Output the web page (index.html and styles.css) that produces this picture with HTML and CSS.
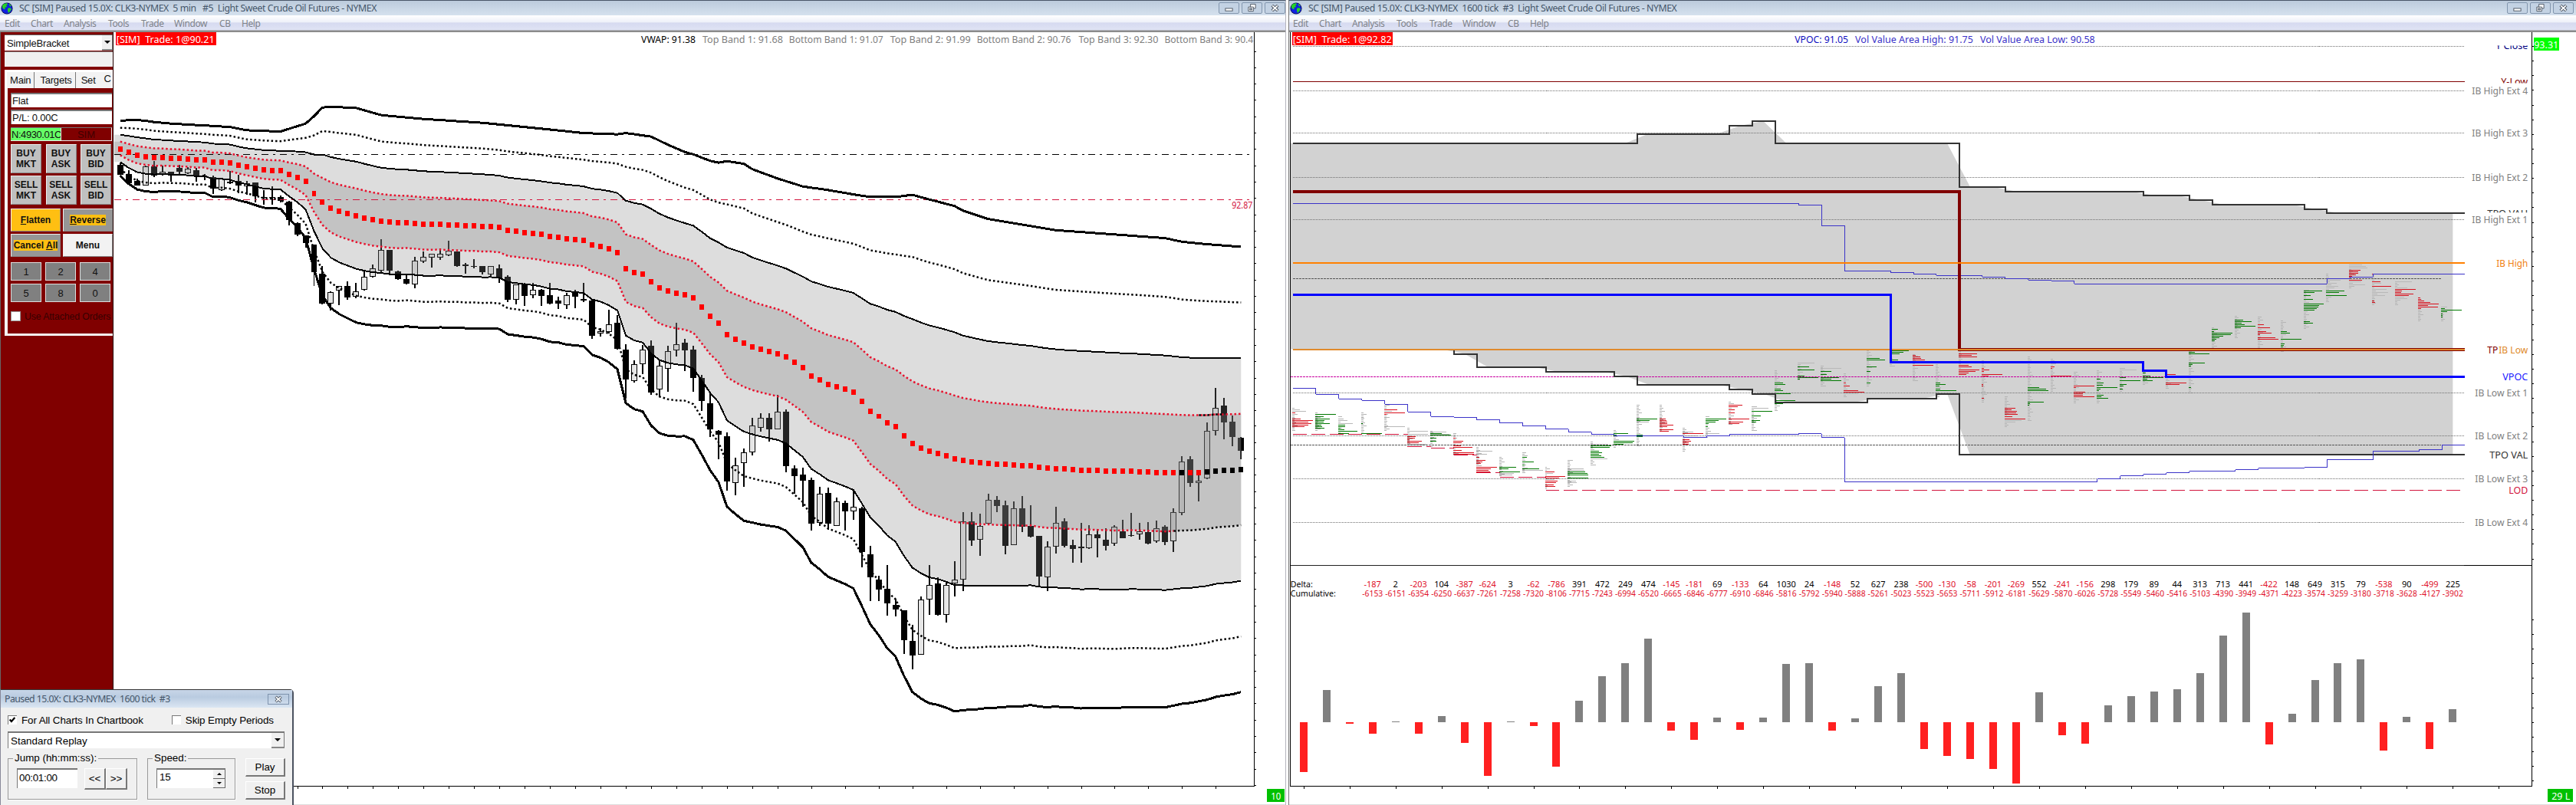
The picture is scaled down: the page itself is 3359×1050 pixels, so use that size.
FILE: index.html
```html
<!DOCTYPE html>
<html>
<head>
	<meta charset="UTF-8">
	<title>CLK3-NYMEX</title>
	<link rel="stylesheet" href="styles.css">
</head>
<body>
	<svg width="0" height="0" class="defs">
		<symbol id="globe" viewBox="0 0 16 16">
			<circle cx="8" cy="8" r="7.6" fill="#0a0a50"/>
			<circle cx="8" cy="8" r="6.8" fill="#1022e0"/>
			<path d="M2 4 Q4 1 8 1.3 L9 3 L7 4 L8 6 L5 7 L6 9 L4 9 L2 7Z" fill="#25d225"/>
			<path d="M9 8 L12 7 L14 9 L12 12 L10 14 L9 11Z" fill="#25d225"/>
			<path d="M11 2 L13.5 4 L13 5.5 L11 4Z" fill="#25d225"/>
		</symbol>
		<symbol id="min" viewBox="0 0 27 14"><rect x="8.5" y="7.5" width="10" height="3.5" fill="#fff" stroke="#48525f"/></symbol>
		<symbol id="restore" viewBox="0 0 27 14">
			<path d="M11.500 1.500h7v6h-7z" fill="#fff" stroke="#48525f"/>
			<path d="M8.500 5.500h7v6h-7z" fill="#fff" stroke="#48525f"/>
			<path d="M10.500 7.500h3v2h-3z" fill="#b9c9dc" stroke="#48525f"/>
		</symbol>
		<symbol id="close" viewBox="0 0 27 14">
			<path d="M9.500 3.300 L17.500 10.700 M17.500 3.300 L9.500 10.700" stroke="#48525f" stroke-width="4"/>
			<path d="M9.900 3.600 L17.100 10.400 M17.100 3.600 L9.900 10.400" stroke="#fff" stroke-width="2"/>
		</symbol>
	</svg>

	<div class="desktop">
		<div class="window left">
			<div class="titlebar">
				<svg class="globe"><use href="#globe"/></svg>
				<span class="title">SC [SIM] Paused 15.0X: CLK3-NYMEX&nbsp; 5 min&nbsp;&nbsp; #5&nbsp; Light Sweet Crude Oil Futures - NYMEX</span>
				<div class="winbtns">
					<svg><use href="#min"/></svg><svg><use href="#restore"/></svg><svg><use href="#close"/></svg>
				</div>
			</div>
			<div class="menubar"><span>Edit</span><span>Chart</span><span>Analysis</span><span>Tools</span><span>Trade</span><span>Window</span><span>CB</span><span>Help</span></div>
			<div class="content">
				<div class="trade">
					<div class="config"><span>SimpleBracket</span><i class="arrow"></i></div>
					<div class="config2"></div>
					<div class="tabs"><span>Main</span><span>Targets</span><span>Set</span><span class="last">C</span></div>
					<div class="panel">
						<div class="field">Flat</div>
						<div class="field">P/L: 0.00C</div>
						<div class="status"><span class="net">N:4930.01C</span><span class="sim">SIM</span></div>
						<div class="orders">
							<button>BUY<br>MKT</button><button>BUY<br>ASK</button><button>BUY<br>BID</button>
							<button>SELL<br>MKT</button><button>SELL<br>ASK</button><button>SELL<br>BID</button>
						</div>
						<div class="actions">
							<button class="yellow"><span><u>F</u>latten</span></button>
							<button class="gray"><span><u>R</u>everse</span></button>
							<button class="gray"><span>Cancel <u>A</u>ll</span></button>
							<button class="menu"><span>Menu</span></button>
						</div>
						<div class="qty">
							<button>1</button><button>2</button><button>4</button>
							<button>5</button><button>8</button><button>0</button>
						</div>
						<div class="attached"><i></i><span>Use Attached Orders</span></div>
					</div>
				</div>
				<svg id="chart5" width="1528" height="1008" viewBox="148 42 1528 1008"></svg>
			</div>
		</div>

		<div class="window right">
			<div class="titlebar">
				<svg class="globe"><use href="#globe"/></svg>
				<span class="title">SC [SIM] Paused 15.0X: CLK3-NYMEX&nbsp; 1600 tick&nbsp; #3&nbsp; Light Sweet Crude Oil Futures - NYMEX</span>
				<div class="winbtns">
					<svg><use href="#min"/></svg><svg><use href="#restore"/></svg><svg><use href="#close"/></svg>
				</div>
			</div>
			<div class="menubar"><span>Edit</span><span>Chart</span><span>Analysis</span><span>Tools</span><span>Trade</span><span>Window</span><span>CB</span><span>Help</span></div>
			<div class="content">
				<svg id="chart3" width="1678" height="1008" viewBox="1681 42 1678 1008"></svg>
			</div>
		</div>
	</div>

	<div class="replay">
		<div class="replay-title"><span>Paused 15.0X: CLK3-NYMEX&nbsp; 1600 tick&nbsp; #3</span><svg><use href="#close"/></svg></div>
		<div class="checks">
			<i class="box"><svg viewBox="0 0 9 9"><path d="M1.500 4 L3.500 6.300 L7.500 1.800" fill="none" stroke="#000" stroke-width="2"/></svg></i><span>For All Charts In Chartbook</span>
			<i class="box second"></i><span>Skip Empty Periods</span>
		</div>
		<div class="combo"><span>Standard Replay</span><i class="arrow"></i></div>
		<div class="controls">
			<div class="group jump">
				<label>Jump (hh:mm:ss):</label>
				<div class="row"><div class="input">00:01:00</div><button>&lt;&lt;</button><button>&gt;&gt;</button></div>
			</div>
			<div class="group speed">
				<label>Speed:</label>
				<div class="row"><div class="input">15<div class="spin"><i class="up"></i><i class="down"></i></div></div></div>
			</div>
			<div class="playstop"><button>Play</button><button>Stop</button></div>
		</div>
	</div>

	<script src="charts.js"></script>
</body>
</html>
```
FILE: styles.css
```css
* {
	box-sizing: border-box;
}
body {
	margin: 0;
	background: #fff;
	font-family: "Noto Sans", sans-serif;
	overflow: hidden;
}
button {
	margin: 0;
	padding: 0;
	font-family: inherit;
}
.defs {
	position: absolute;
}
.desktop {
	display: flex;
	width: 3359px;
	height: 1050px;
}
.window {
	height: 1050px;
	border-top: 1px solid #4a5668;
	display: flex;
	flex-direction: column;
}
.left {
	width: 1677px;
	border-right: 1px solid #b5b5bd;
	margin-right: 3px;
}
.right {
	width: 1679px;
	border-left: 1px solid #777;
}

/* title and menu */
.titlebar {
	height: 19px;
	display: flex;
	align-items: center;
	background: linear-gradient(#bccbdc, #d5e1ee);
	color: #45566a;
	font-size: 12.3px;
}
.globe {
	width: 16px;
	height: 16px;
	margin-left: 1px;
}
.title {
	margin-left: 8px;
	white-space: nowrap;
	letter-spacing: -0.43px;
}
.winbtns {
	display: flex;
	gap: 3px;
	margin-left: auto;
	margin-right: 0;
}
.right .winbtns {
	margin-right: 3px;
}
.winbtns svg {
	width: 27px;
	height: 15px;
	border: 1px solid #8296ae;
	border-radius: 2px;
	background: #c3d2e3;
}
.menubar {
	height: 22px;
	display: grid;
	grid-template-columns: 34px 43px 58px 43px 43px 59px 29px auto;
	align-items: center;
	padding: 0 0 2px 6px;
	background: linear-gradient(#fff, #eef1f9 40%, #d6daf0 45%, #dfe3f4 85%, #8b8b8b 92%);
	color: #7e8289;
	font-size: 12px;
	letter-spacing: -0.4px;
}
.right .menubar {
	padding-left: 5px;
}
.content {
	display: flex;
	flex: 1;
}
.content > svg {
	display: block;
	border-bottom: 1px solid #ddd;
}

/* trade panel */
.trade {
	width: 148px;
	height: 1008px;
	padding: 3px 0 0 5px;
	background: #800000;
	border-left: 1px solid #666;
	border-right: 1px solid #200;
	font-family: "Liberation Sans", sans-serif;
	font-size: 13px;
	color: #111;
}
.config {
	display: flex;
	justify-content: space-between;
	height: 21px;
	padding-left: 3px;
	line-height: 22px;
	background: #fff;
	border-top: 1px solid #666;
	letter-spacing: -0.2px;
}
.arrow {
	width: 14px;
	background: #f0f0f0;
	border-right: 1px solid #777;
	border-bottom: 2px solid #888;
	display: flex;
	align-items: center;
	justify-content: center;
}
.arrow::after {
	content: "";
	border: 4px solid transparent;
	border-top-color: #000;
	border-bottom: 0;
}
.config2 {
	height: 20px;
	margin-top: 1px;
	background: #f0f0f0;
	border-top: 1px solid #777;
}
.tabs {
	display: flex;
	height: 24px;
	margin-top: 4px;
	padding: 3px 0 0 3px;
	background: #fff;
}
.tabs span {
	padding: 3px 4px 0;
	background: #f3f3f3;
	border-right: 1px solid #777;
	letter-spacing: -0.2px;
}
.tabs span:nth-child(2) {
	padding-left: 7px;
}
.tabs span:nth-child(3) {
	border: 0;
	padding-left: 7px;
	padding-right: 11px;
}
.tabs .last {
	border: 0;
	padding: 1px 0 0;
}
.panel {
	height: 323px;
	border-left: 4px solid #f4f4f4;
	border-bottom: 3px solid #f4f4f4;
	padding: 6px 1px 0 4px;
}
.field {
	height: 19px;
	margin-bottom: 3px;
	line-height: 18px;
	padding-left: 1px;
	background: #fff;
	border-top: 2px solid #777;
	border-left: 1px solid #777;
	letter-spacing: -0.2px;
}
.status {
	display: flex;
	height: 18px;
	margin-top: 4px;
	line-height: 18px;
	border-bottom: 1px solid #eee;
	border-right: 1px solid #eee;
	border-top: 1px solid #777;
}
.net {
	width: 66px;
	padding-left: 1px;
	overflow: hidden;
	background: #66ff66;
	border-right: 1px solid #eee;
	letter-spacing: -0.45px;
}
.sim {
	flex: 1;
	text-align: center;
	color: #400000;
}
.orders {
	display: grid;
	grid-template-columns: 40px 40px 40px;
	grid-auto-rows: 38px;
	gap: 3px 5.5px;
	margin-top: 4px;
}
.orders button, .qty button, .actions button {
	border: 1px solid #eee;
	border-right-color: #888;
	border-bottom-color: #888;
	color: #111;
}
.orders button {
	background: #c0c0c0;
	font-size: 12px;
	font-weight: bold;
	line-height: 14px;
}
.actions {
	display: grid;
	grid-template-columns: 65px 65px;
	grid-auto-rows: 30px;
	gap: 3px;
	margin-top: 5px;
}
.actions button {
	font-size: 12px;
	font-weight: bold;
}
.actions .yellow, .actions .gray span {
	background: #ffbf12;
}
.actions .gray {
	background: #969696;
}
.actions .menu {
	background: #f2f2f2;
}
.qty {
	display: grid;
	grid-template-columns: 40px 40px 40px;
	grid-auto-rows: 24px;
	gap: 4px 5px;
	margin-top: 7px;
}
.qty button {
	background: #808080;
	border: 1px solid #ddd;
	font-size: 13px;
}
.attached {
	display: flex;
	gap: 5px;
	margin-top: 12px;
	color: #360000;
	font-size: 12.3px;
	line-height: 14px;
	white-space: nowrap;
	letter-spacing: -0.1px;
}
.attached i {
	width: 13px;
	height: 13px;
	flex: none;
	background: #fff;
	border: 1px solid #999;
}

/* replay dialog, floats over the left chart */
.replay {
	position: absolute;
	left: 0;
	top: 899px;
	width: 383px;
	height: 151px;
	background: #f0f0f0;
	border-top: 1px solid #333;
	border-right: 2px solid #4b5260;
	border-left: 1px solid #889;
	border-radius: 0 5px 0 0;
	font-family: "Liberation Sans", sans-serif;
	font-size: 13.4px;
	color: #000;
}
.replay-title {
	display: flex;
	justify-content: space-between;
	align-items: center;
	height: 23px;
	padding: 0 4px 0 5px;
	background: linear-gradient(#c8d6e8, #b9cbe0 40%, #dbe6f3);
	font-family: "Noto Sans", sans-serif;
	font-size: 12.3px;
	letter-spacing: -0.55px;
	color: #45566a;
}
.replay-title svg {
	width: 28px;
	height: 14px;
	border: 1px solid #7e93ad;
}
.checks {
	display: flex;
	align-items: center;
	height: 18px;
	margin-top: 7px;
	padding-left: 9px;
	letter-spacing: -0.1px;
}
.box {
	width: 12px;
	height: 12px;
	margin-right: 6px;
	background: #fff;
	border-top: 1px solid #777;
	border-left: 1px solid #777;
	display: flex;
}
.box svg {
	width: 10px;
	height: 10px;
}
.second {
	margin-left: 37px;
}
.combo {
	display: flex;
	justify-content: space-between;
	width: 361px;
	height: 22px;
	margin: 6px 0 0 9px;
	padding-left: 3px;
	line-height: 21px;
	background: #fff;
	border-top: 2px solid #777;
	border-left: 1px solid #777;
}
.combo .arrow {
	width: 17px;
}
.controls {
	display: flex;
	margin: 13px 0 0 9px;
}
.group {
	position: relative;
	height: 54px;
	border: 1px solid #999;
	box-shadow: 1px 1px #fff;
}
.group label {
	position: absolute;
	top: -9px;
	left: 6px;
	padding: 0 2px;
	background: #f0f0f0;
	white-space: nowrap;
}
.jump {
	width: 169px;
	padding: 12px 0 0 11px;
}
.speed {
	width: 115px;
	margin-left: 13px;
	padding: 12px 0 0 11px;
}
.row {
	display: flex;
}
.input {
	width: 79px;
	height: 26px;
	padding: 3px 0 0 2px;
	background: #fff;
	border-top: 2px solid #777;
	border-left: 1px solid #777;
	letter-spacing: -0.3px;
}
.jump .input {
	margin-right: 9px;
}
.speed .input {
	display: flex;
	width: 90px;
	padding: 0 0 0 3px;
	line-height: 20px;
}
.spin {
	width: 16px;
	margin-left: auto;
	display: grid;
	grid-template-rows: 1fr 1fr;
}
.spin i {
	display: flex;
	align-items: center;
	justify-content: center;
	background: #f0f0f0;
	border-right: 1px solid #666;
	border-bottom: 1px solid #666;
}
.spin i::after {
	content: "";
	border: 3px solid transparent;
}
.spin .up::after {
	border-top: 0;
	border-bottom-color: #000;
}
.spin .down::after {
	border-bottom: 0;
	border-top-color: #000;
}
.replay button {
	background: #f0f0f0;
	border: 1px solid #fff;
	border-right: 2px solid #777;
	border-bottom: 2px solid #777;
	font-size: 13.4px;
	color: #000;
}
.row button {
	width: 28px;
	height: 28px;
}
.playstop {
	display: flex;
	flex-direction: column;
	gap: 6px;
	margin-left: 13px;
}
.playstop button {
	width: 52px;
	height: 24px;
}

/* charts */
.crisp {
	shape-rendering: crispEdges;
}
text {
	font-family: "Noto Sans", sans-serif;
	font-size: 12.5px;
}
.num {
	font-size: 11px;
}
```
FILE: charts.js
```js
function draw(id) {
	var svg = document.getElementById(id);
	var out = [];
	return {
		line: function (x1, y1, x2, y2, color, w, dash) {
			out.push('<line class="crisp" x1="' + x1 + '" y1="' + y1 + '" x2="' + x2 + '" y2="' + y2 + '" stroke="' + color + '" stroke-width="' + (w || 1) + '"' + (dash ? ' stroke-dasharray="' + dash + '"' : '') + '/>');
		},
		rect: function (x, y, w, h, fill, stroke) {
			out.push('<rect class="crisp" x="' + x + '" y="' + y + '" width="' + w + '" height="' + h + '" fill="' + fill + '"' + (stroke ? ' stroke="' + stroke + '"' : '') + '/>');
		},
		path: function (pts, color, w, dash) {
			out.push('<polyline points="' + pts.join(' ') + '" fill="none" stroke="' + color + '" stroke-width="' + w + '"' + (dash ? ' stroke-dasharray="' + dash + '"' : ' class="crisp"') + '/>');
		},
		area: function (pts, color, opacity) {
			out.push('<polygon points="' + pts.join(' ') + '" fill="' + color + '" fill-opacity="' + (opacity || 1) + '"/>');
		},
		text: function (x, y, s, color, len, anchor, extra) {
			out.push('<text x="' + x + '" y="' + y + '" fill="' + color + '"' + (len ? ' textLength="' + len + '" lengthAdjust="spacingAndGlyphs"' : '') + (anchor ? ' text-anchor="' + anchor + '"' : '') + ' ' + (extra || '') + '>' + s + '</text>');
		},
		raw: function (s) { out.push(s); },
		done: function () { svg.innerHTML = out.join(''); }
	};
}

// 5 min chart: VWAP and bands
function chart5() {
	var c = draw('chart5');
	var vwap = [193.7, 198.3, 202, 203.7, 205, 205, 205.7, 206, 206.7, 207.7, 207.7, 210.7, 210.7, 211.7, 214.7, 217, 219, 221, 221.7, 222,
		226.7, 230.7, 236, 251.7, 263, 270.7, 275, 278, 281, 283.7, 286, 287.7, 289, 289.7, 289.7, 290.7, 291.7, 292, 292, 292.7,
		293, 293.7, 294, 294.7, 295, 296, 300, 301.3, 302.7, 303.7, 305.3, 307.7, 308.7, 310.7, 311.7, 313, 318.7, 320.7, 324, 328.7,
		350, 354.7, 357, 367, 374.6, 378.9, 381.7, 384, 387.8, 399.6, 411.9, 420.9, 436, 441.6, 446.8, 451.5, 454.8, 457.7, 460.5, 464.7,
		471.8, 478.9, 489.8, 494.9, 500.6, 503.9, 507.2, 511, 523.3, 536, 543.1, 551.6, 557.2, 569, 578.9, 584.6, 589.3, 591.7, 595, 598.8,
		601.1, 602.5, 604, 604.9, 605.8, 606.3, 606.8, 607.7, 607.7, 609.6, 611, 611.5, 612.4, 612.9, 613.9, 613.9, 614.3, 614.8, 615.3, 615.3,
		615.3, 615.7, 616.2, 616.7, 617.2, 617.2, 617.2, 617.2, 616.7, 616.2, 614.8, 614.3, 613.9, 612.9];
	// outer band, [bar, y]
	var top = [[0, 158], [1, 156.7], [2.5, 156.7], [4, 159.3], [6, 161.3], [13, 165.7], [15, 170], [19, 171.7], [22, 161.3], [23, 151.7], [24, 140.3], [25, 139.3],
		[28, 141], [31, 150.3], [36, 155.3], [43, 160.3], [50, 168], [55, 173.7], [59, 175.3], [60, 173.7], [63, 178.3], [65, 189], [67, 198.5], [68, 201.4],
		[70, 210], [71, 212.3], [72, 210.4], [74, 213.7], [75, 220.8], [78, 233], [81, 243.4], [84, 248.1], [87, 253.8], [89, 257.1], [92, 257.1], [94, 254.3],
		[96, 260.4], [99, 268.9], [100, 275], [103, 285.9], [111, 300.5], [124, 310.9], [126, 315.6], [129, 318.9], [133, 322.2]];
	// high, open, close, low (0 = hollow, 1 = filled); y = 40 + v / 3
	var early = [[515, 525, 563, 563, 1], [545, 562, 597, 597, 1], [580, 588, 605, 605, 1], [527, 532, 605, 605, 0], [510, 532, 568, 572, 1], [527, 553, 563, 568, 0],
		[553, 553, 567, 592, 1], [525, 538, 553, 560, 1], [533, 540, 558, 560, 0], [538, 545, 568, 590, 1], [562, 570, 573, 585, 1], [568, 573, 618, 638, 1],
		[580, 580, 625, 627, 0], [550, 590, 597, 600, 1], [565, 588, 605, 635, 1], [588, 597, 610, 643, 0], [595, 595, 648, 672, 1], [625, 652, 655, 680, 1],
		[610, 652, 655, 680, 1], [645, 652, 665, 672, 1], [665, 668, 740, 763, 1], [750, 752, 797, 805, 1], [800, 802, 830, 850, 1], [837, 838, 945, 998, 1],
		[922, 950, 1068, 1070, 1], [1020, 1022, 1067, 1095, 0], [998, 1000, 1016, 1075, 0], [980, 1000, 1043, 1053, 1], [988, 1020, 1040, 1047, 0], [935, 963, 1015, 1018, 0],
		[915, 930, 963, 967, 0], [815, 858, 938, 948, 0], [858, 858, 938, 957, 1], [938, 942, 973, 975, 1], [952, 973, 990, 993, 1], [885, 900, 994, 1007, 0],
		[865, 885, 902, 908, 0], [873, 873, 887, 928, 0], [852, 873, 887, 898, 0], [822, 862, 880, 882, 0], [865, 865, 922, 923, 1], [908, 915, 922, 950, 0],
		[893, 921, 924, 930, 1], [920, 922, 945, 955, 1], [920, 922, 953, 965, 0], [915, 930, 968, 987, 1], [957, 963, 1052, 1062, 1], [992, 994, 1052, 1070, 0],
		[988, 990, 1037, 1077, 1], [988, 1015, 1035, 1048, 0], [1012, 1015, 1037, 1077, 1], [988, 1035, 1067, 1070, 1], [1040, 1055, 1068, 1090, 1], [1025, 1035, 1073, 1090, 0],
		[1015, 1025, 1042, 1085, 1], [988, 1050, 1057, 1063, 1], [1052, 1055, 1193, 1205, 1], [1165, 1177, 1186, 1197, 0], [1093, 1150, 1180, 1185, 0], [1113, 1143, 1245, 1247, 1],
		[1228, 1248, 1365, 1440, 1], [1290, 1306, 1370, 1377, 0], [1230, 1248, 1306, 1345, 0], [1213, 1233, 1415, 1425, 1], [1290, 1312, 1405, 1430, 0], [1233, 1255, 1322, 1412, 0],
		[1143, 1228, 1250, 1275, 0], [1205, 1222, 1250, 1333, 1]];
	// y = 200 + v * 0.4719
	var late = [[532, 542, 620, 658, 1], [613, 620, 684, 712, 1], [658, 690, 765, 787, 1], [768, 770, 780, 847, 1], [773, 785, 910, 934, 1], [843, 865, 914, 948, 0],
		[817, 829, 859, 923, 0], [733, 755, 829, 838, 0], [718, 734, 760, 772, 0], [718, 733, 765, 798, 1], [667, 714, 765, 765, 0], [707, 714, 866, 883, 1],
		[865, 873, 895, 944, 1], [870, 889, 907, 978, 1], [898, 905, 1025, 1045, 1], [923, 943, 1024, 1033, 0], [925, 940, 1025, 1043, 1], [953, 965, 1031, 1033, 0],
		[963, 968, 992, 1045, 1], [933, 979, 991, 1015, 0], [980, 983, 1105, 1147, 1], [1088, 1110, 1175, 1240, 1], [1170, 1180, 1207, 1240, 1], [1140, 1205, 1245, 1280, 1],
		[1235, 1250, 1262, 1283, 1], [1265, 1266, 1347, 1385, 1], [1305, 1350, 1391, 1428, 1], [1226, 1235, 1387, 1387, 0], [1140, 1196, 1236, 1278, 0], [1175, 1190, 1278, 1280, 1],
		[1187, 1196, 1277, 1298, 0], [1130, 1181, 1190, 1228, 0], [993, 1020, 1181, 1213, 0], [993, 1020, 1072, 1088, 1], [998, 1031, 1071, 1115, 0], [943, 961, 1025, 1030, 0],
		[950, 960, 976, 993, 1], [963, 975, 1087, 1110, 1], [964, 984, 1086, 1086, 0], [950, 983, 1035, 1048, 1], [975, 1033, 1062, 1063, 1], [1060, 1060, 1172, 1197, 1],
		[1075, 1090, 1175, 1213, 0], [980, 1024, 1090, 1108, 0], [1010, 1020, 1087, 1092, 1], [1070, 1086, 1095, 1133, 1], [1023, 1090, 1094, 1133, 1], [1030, 1056, 1094, 1095, 0],
		[1040, 1055, 1065, 1118, 1], [1038, 1070, 1087, 1100, 1], [1030, 1034, 1080, 1087, 0], [1015, 1046, 1065, 1065, 1], [995, 1058, 1060, 1062, 1], [1023, 1046, 1055, 1070, 0],
		[1022, 1050, 1080, 1082, 1], [1018, 1039, 1075, 1078, 0], [1030, 1034, 1076, 1085, 1], [983, 994, 1075, 1103, 0], [840, 855, 995, 1003, 0], [840, 848, 914, 923, 1],
		[887, 906, 914, 964, 0], [745, 770, 900, 902, 0], [648, 704, 770, 783, 0], [675, 698, 745, 792, 1], [724, 744, 786, 812, 1], [787, 788, 825, 848, 1]];

	function outer(i) {
		for (var k = 1; k < top.length; k++) {
			if (i <= top[k][0]) {
				var a = top[k - 1], b = top[k];
				return a[1] + (b[1] - a[1]) * (i - a[0]) / (b[0] - a[0]);
			}
		}
	}
	// mult: 1 = outer band, negative = below the VWAP
	function band(mult, from, to) {
		var pts = [];
		for (var i = from || 0; i <= (to === undefined ? 133 : to); i++) {
			pts.push((156 + 11 * i) + ',' + (vwap[i] - mult * (vwap[i] - outer(i))).toFixed(1));
		}
		return pts;
	}
	function between(mult) {
		var up = band(mult), low = band(-mult);
		up.unshift('148,' + up[0].split(',')[1]);
		low.unshift('148,' + low[0].split(',')[1]);
		return up.concat(low.reverse());
	}

	early.concat(late).forEach(function (k, i) {
		var y = function (v) { return Math.round(i < 68 ? 40 + v / 3 : 200 + v * 0.4719); };
		var x = 156 + 11 * i;
		c.rect(x - 1, y(k[0]), 2, Math.max(1, y(k[3]) - y(k[0])), '#000');
		if (k[4]) c.rect(x - 4, y(k[1]), 8, Math.max(1, y(k[2]) - y(k[1])), '#000');
		else c.rect(x - 3.5, y(k[1]) + 0.5, 7, Math.max(1, y(k[2]) - y(k[1]) - 1), '#e6e6e6', '#000');
	});
	c.area(between(0.5), '#808080', 0.27);
	c.area(between(0.25), '#808080', 0.28);

	c.line(148, 201.5, 1630, 201.5, '#000', 1, '9 6 3 6');
	c.line(148, 260.5, 1630, 260.5, '#d2143c', 1, '9 6 3 6');

	c.path(band(1), '#000', 3);
	c.path(band(-1), '#000', 3);
	c.path(band(0.5), '#000', 2);
	c.path(band(-0.5), '#000', 2);
	c.path(band(0.75), '#000', 2.5, '2.5 3');
	c.path(band(-0.75), '#000', 2.5, '2.5 3');
	c.path(band(0.25), '#e8112d', 2.5, '2.5 3');
	c.path(band(-0.25, 0, 125), '#e8112d', 2.5, '2.5 3');
	c.path(band(-0.25, 125, 133), '#000', 2.5, '2.5 3');
	c.path(band(0.25, 128, 131), '#000', 2.5, '2.5 3');
	vwap.forEach(function (v, i) {
		var black = i == 126 || i > 128;
		c.rect(153 + 11 * i, Math.round(v) - 3, 6, 7, black ? '#000' : '#f00');
	});

	// axes
	c.line(1636.5, 42, 1636.5, 1027, '#000');
	for (var y = 66.5; y < 1027; y += 21.3) c.line(1637, Math.round(y) + 0.5, 1639, Math.round(y) + 0.5, '#000');
	c.line(148, 1026.5, 1637, 1026.5, '#000');
	for (var x = 387; x < 1015; x += 33) c.line(x + 0.5, 1027, x + 0.5, 1030, '#000');
	for (x = 1058; x < 1590; x += 44) c.line(x + 0.5, 1027, x + 0.5, 1030, '#000');

	c.rect(150, 42, 131, 17, '#f00');
	c.text(151, 56, '[SIM]&#160; Trade: 1@90.21', '#fff', 128);
	c.text(836, 56, 'VWAP: 91.38', '#000', 71);
	c.text(916, 56, 'Top Band 1: 91.68', '#808080', 105);
	c.text(1029, 56, 'Bottom Band 1: 91.07', '#808080', 123);
	c.text(1161, 56, 'Top Band 2: 91.99', '#808080', 105);
	c.text(1274, 56, 'Bottom Band 2: 90.76', '#808080', 123);
	c.text(1407, 56, 'Top Band 3: 92.30', '#808080', 104);
	c.text(1519, 56, 'Bottom Band 3: 90.4', '#808080', 116);
	c.text(1607, 272, '92.87', '#d2143c', 27);
	c.rect(1653, 1030, 23, 17, '#00c000');
	c.text(1658, 1044, '10', '#fff', 13);
	c.done();
}

// 1600 tick chart
function chart3() {
	var c = draw('chart3');
	var X0 = 1685, STEP = 30, END = 3215;

	// [first bar, y] levels
	var tpoVah = [[0, 187], [15, 174.7], [19, 164], [20, 158], [21, 187], [29, 244], [31, 250], [37, 255], [39, 261], [40, 267], [44, 273], [45, 278]];
	var tpoVal = [[0, 456], [7, 462], [8, 479], [11, 485], [14, 491], [15, 502], [19, 508], [20, 514], [21, 525], [25, 520], [28, 514], [29, 594]];
	var tpoc = [[0, 250], [29, 456]];
	var vpoc = [[0, 384.5], [26, 472.5], [37, 483.5], [38, 491.5]];
	var vah = [[0, 265.5], [22, 267.5], [23, 294.5], [24, 353.5], [26, 355.5], [27, 357.5], [28, 359.5], [30, 361.5], [31, 363.5], [32, 365.5], [33, 366.5], [34, 370.5], [45, 363.5], [46, 361.5], [47, 357.5]];
	var val = [[0, 506.5], [1, 514.5], [2, 520.5], [3, 522.5], [4, 527.5], [5, 537.5], [6, 543.5], [7, 544.5], [8, 548.5], [9, 552.5], [10, 556.5], [11, 560.5], [12, 564.5], [13, 567.5],
		[14, 569.5], [17, 571.5], [18, 569.5], [19, 567.5], [22, 566.5], [23, 571.5], [24, 629.5], [35, 625.5], [36, 621.5], [37, 619.5], [38, 617.5], [39, 615.5], [41, 613.5],
		[42, 611.5], [44, 610.5], [45, 600.5], [47, 589.5], [49, 587.5], [50, 581.5]];

	function steps(levels) {
		var pts = [];
		levels.forEach(function (l, k) {
			var x2 = k + 1 < levels.length ? X0 + STEP * levels[k + 1][0] : END;
			pts.push((X0 + STEP * l[0]) + ',' + l[1], x2 + ',' + l[1]);
		});
		return pts;
	}
	function centers(levels) {
		var pts = [];
		for (var i = 0; i < 51; i++) {
			var y;
			levels.forEach(function (l) { if (l[0] <= i) y = l[1]; });
			pts.push((1699 + STEP * i) + ',' + y);
		}
		pts.unshift('1682,' + levels[0][1]);
		return pts;
	}
	c.area(centers(tpoVah).concat(centers(tpoVal).reverse()), '#d2d2d2');

	// volume profile of each bar: [from, to] of the tail, side, [y, width] rows, wide gray rows
	var profiles = [
		[457, 550, 'r', [[475, 8], [496, 12], [502, 20], [508, 50], [514, 38], [520, 46], [526, 38], [532, 30]], [[463, 18], [469, 34]]],
		[475, 550, 'g', [[481, 50], [490, 20], [496, 32], [502, 36], [508, 22], [514, 20], [520, 36], [526, 14], [532, 16], [538, 22]], []],
		[490, 560, 'g', [[526, 16], [532, 16], [538, 6], [544, 14], [550, 46], [559, 26]], [[508, 22], [520, 35]]],
		[475, 555, 'g', [[520, 4], [559, 50]], []],
		[445, 550, 'r', [[463, 32], [475, 50], [481, 6]], [[469, 18], [532, 50]]],
		[538, 610, 'r', [[571, 20], [577, 18], [583, 6], [589, 36], [595, 28], [610, 30]], [[550, 50], [562, 50], [601, 46], [604, 40]]],
		[550, 610, 'g', [[559, 28], [565, 50], [577, 14], [589, 14]], [[553, 38], [562, 46]]],
		[558, 643, 'r', [[577, 6], [589, 24], [595, 20], [607, 18], [613, 46], [625, 20], [634, 50], [640, 50]], []],
		[613, 712, 'r', [[652, 8], [664, 22], [670, 14], [676, 12], [691, 50], [697, 36], [703, 30], [709, 34], [712, 34]], [[628, 38], [640, 25]]],
		[652, 725, 'g', [[691, 40], [697, 22], [709, 50]], [[715, 35], [721, 32]]],
		[633, 715, 'g', [[652, 12], [670, 28], [682, 6], [697, 40]], [[703, 50]]],
		[690, 778, 'r', [[709, 24], [727, 50], [733, 36], [745, 32], [751, 28], [760, 22], [766, 26]], [[715, 20], [739, 24]]],
		[663, 768, 'g', [[709, 42], [715, 48], [721, 50], [733, 50]], [[697, 38], [703, 40], [745, 20], [751, 22]]],
		[590, 682, 'g', [[607, 50], [613, 46], [628, 20], [634, 28], [640, 20], [646, 25], [652, 34]], [[601, 42], [658, 40]]],
		[545, 613, 'g', [[559, 36], [565, 8], [568, 14], [589, 50], [595, 46], [601, 24]], []],
		[445, 607, 'g', [[502, 50], [508, 32], [565, 14], [568, 14], [571, 14]], [[514, 30]]],
		[445, 550, 'r', [[496, 14], [502, 14], [508, 16], [514, 18], [520, 18], [526, 34], [532, 18], [544, 34], [550, 22]], []],
		[538, 630, 'r', [[559, 50], [583, 16], [589, 20], [595, 14], [601, 14]], [[553, 25], [568, 35]]],
		[490, 577, 'g', [[502, 50], [508, 32], [514, 24], [520, 8], [532, 6]], [[496, 20], [559, 34]]],
		[433, 526, 'r', [[445, 34], [451, 22], [463, 14], [475, 14], [496, 18], [502, 50], [514, 36], [520, 26]], []],
		[450, 550, 'g', [[469, 50], [485, 22], [496, 36], [508, 20], [514, 12]], [[457, 40]]],
		[310, 470, 'g', [[358, 20], [364, 26], [382, 14], [388, 20], [400, 38], [427, 50], [433, 44], [439, 20]], []],
		[280, 350, 'g', [[295, 28], [307, 40], [331, 16], [337, 50], [343, 6]], [[280, 40]]],
		[290, 370, 'g', [[313, 26], [325, 14], [337, 44], [343, 26], [349, 50]], [[301, 50]]],
		[320, 415, 'r', [[358, 6], [370, 14], [388, 36], [394, 50]], [[400, 35]]],
		[230, 370, 'g', [[262, 32], [268, 44], [295, 24], [313, 10], [358, 10]], []],
		[230, 290, 'g', [[232, 46], [238, 34], [244, 24], [268, 20]], []],
		[245, 350, 'r', [[250, 8], [256, 18], [262, 20], [268, 30], [289, 50]], []],
		[430, 565, 'g', [[508, 12], [514, 24], [520, 10], [532, 12], [538, 50]], []],
		[385, 480, 'r', [[394, 44], [400, 32], [406, 44], [439, 24], [445, 32], [457, 50], [463, 40], [469, 24], [475, 18]], []],
		[420, 585, 'r', [[451, 6], [457, 18], [463, 6], [475, 50], [481, 16], [514, 4], [520, 4], [568, 5]], []],
		[560, 685, 'r', [[607, 26], [613, 16], [619, 30], [625, 28], [631, 32], [640, 18], [652, 50]], [[658, 40], [664, 25]]],
		[405, 660, 'g', [[526, 28], [532, 45], [538, 50], [583, 38], [589, 6], [595, 4]], [[547, 40]]],
		[415, 545, 'r', [[445, 10], [451, 4], [481, 50]], []],
		[465, 585, 'r', [[520, 50], [526, 6], [544, 28], [550, 22], [556, 22], [562, 50]], []],
		[460, 590, 'g', [[493, 10], [508, 16], [517, 14], [526, 50], [532, 10], [538, 6], [556, 16], [562, 12], [568, 28]], []],
		[450, 545, 'g', [[487, 14], [499, 50], [514, 16], [520, 10], [532, 8]], [[457, 40]]],
		[465, 515, 'g', [[469, 8], [481, 18], [487, 50], [493, 12], [499, 24]], []],
		[475, 530, 'r', [[475, 24], [508, 50], [514, 34]], [[481, 38]]],
		[385, 550, 'g', [[388, 14], [394, 50], [430, 38], [436, 10], [442, 6], [526, 5]], []],
		[290, 370, 'g', [[298, 14], [307, 6], [313, 50], [319, 46], [325, 28], [331, 18], [337, 12], [343, 8]], []],
		[245, 330, 'g', [[262, 20], [268, 40], [274, 16], [280, 24], [286, 50], [292, 14]], []],
		[250, 370, 'r', [[280, 14], [292, 30], [307, 20], [313, 34], [319, 6], [331, 42], [337, 50]], []],
		[265, 390, 'g', [[307, 14], [313, 22], [337, 50], [355, 10], [361, 8], [367, 6]], []],
		[145, 300, 'g', [[148, 46], [154, 26], [166, 16], [181, 22], [199, 50], [205, 38], [211, 36], [217, 32], [223, 26], [268, 14], [274, 22]], []],
		[80, 190, 'g', [[148, 44], [154, 32], [166, 50]], [[106, 36], [118, 26], [130, 30], [136, 20]]],
		[46, 140, 'r', [[67, 28], [73, 22], [79, 22], [85, 16], [91, 8], [94, 20], [106, 32]], [[46, 32], [52, 40], [58, 44], [112, 30], [124, 38]]],
		[80, 200, 'r', [[80, 12], [112, 20], [130, 46], [187, 6], [193, 8]], [[118, 22], [142, 36], [154, 38], [166, 32]]],
		[110, 205, 'r', [[142, 50], [148, 16], [154, 14], [160, 44], [166, 34]], [[112, 40], [136, 30], [172, 22], [178, 30]]],
		[173, 265, 'r', [[175, 6], [181, 8], [187, 14], [193, 30], [199, 50], [205, 24], [211, 48], [217, 8]], []],
		[210, 265, 'g', [[217, 10], [223, 50], [229, 14], [238, 4], [244, 4], [250, 4]], [[211, 14]]]
	];
	var tail = [3, 3, 5, 3, 7, 3, 3, 4];
	profiles.forEach(function (p, i) {
		var base = i < 28 ? 380 : 330, x = X0 - 1 + STEP * i;
		for (var v = p[0], n = i; v <= p[1]; v += 6, n++) c.rect(x, Math.round(base + v / 3), tail[n % 8], 1, '#b4b4b4');
		p[4].forEach(function (r) { c.rect(x, Math.round(base + r[0] / 3), Math.round(r[1] * 0.54), 1, '#b8b8b8'); });
		p[3].forEach(function (r) { c.rect(x, Math.round(base + r[0] / 3), Math.round(r[1] * 0.54), 1, p[2] == 'r' ? '#d8101c' : '#007800'); });
	});

	// low of day
	[[0, 5, 567.5], [5, 6, 583.5], [6, 7, 585.5], [7, 8, 594.5], [8, 9, 617.5], [9, 11, 623.5], [11, 51, 640.5]].forEach(function (l) {
		c.line(X0 + STEP * l[0], l[2], X0 + STEP * l[1], l[2], '#d2143c', 1, '18 6');
	});

	// reference lines
	[60.5, 118.5, 173.5, 231.5, 286.5, 512.5, 569.5, 625.5, 682.5].forEach(function (y) { c.line(X0, y, 3214, y, '#707070', 1, '1 1'); });
	c.line(X0, 363.5, 3184, 363.5, '#555', 1, '3 1');
	c.line(1682, 581.5, 3184, 581.5, '#555', 1, '3 1');
	c.line(1682, 491.5, 2828, 491.5, '#c800a0', 1, '3 1');
	c.line(X0, 106.5, END, 106.5, '#800000', 1);

	c.path(steps(tpoVah), '#333', 2);
	c.path(steps(tpoVal), '#333', 2);
	c.path(steps(vah), '#3a32c8', 1);
	c.path(steps(val), '#3a32c8', 1);
	c.path(steps(tpoc), '#800000', 4);
	c.line(X0, 343, END, 343, '#ff8000', 2);
	c.line(X0, 456, END, 456, '#e08a2c', 2);
	c.path(steps(vpoc), '#0000ff', 3);

	// labels at the right
	c.raw('<clipPath id="c1"><rect x="3200" y="59.500" width="100" height="10"/></clipPath><clipPath id="c2"><rect x="3200" y="95" width="100" height="13.500"/></clipPath><clipPath id="c3"><rect x="3200" y="265" width="100" height="12.500"/></clipPath>');
	c.text(3297, 64, 'Y Close', '#000080', 42, 'end', 'clip-path="url(#c1)"');
	c.text(3297, 111, 'Y-Low', '#800000', 35, 'end', 'clip-path="url(#c2)"');
	c.text(3297, 283, 'TPO VAH', '#333', 53, 'end', 'clip-path="url(#c3)"');
	[[4, 123], [3, 178], [2, 236], [1, 291]].forEach(function (l) { c.text(3297, l[1], 'IB High Ext ' + l[0], '#808080', 73, 'end'); });
	[[1, 517], [2, 574], [3, 630], [4, 687]].forEach(function (l) { c.text(3297, l[1], 'IB Low Ext ' + l[0], '#808080', 69, 'end'); });
	c.text(3297, 348, 'IB High', '#f08010', 41, 'end');
	c.text(3244, 461, 'TP', '#800000', 14);
	c.text(3297, 461, 'IB Low', '#e08a2c', 38, 'end');
	c.text(3297, 496, 'VPOC', '#2020ff', 33, 'end');
	c.text(3297, 599, 'TPO VAL', '#333', 50, 'end');
	c.text(3297, 645, 'LOD', '#d2143c', 25, 'end');

	// axes
	c.line(1681.5, 42, 1681.5, 1027, '#000');
	c.line(3302.5, 42, 3302.5, 1027, '#000');
	c.line(1682, 738.5, 3214, 738.5, '#222', 1);
	c.line(3214, 738.5, 3302, 738.5, '#000', 1);
	c.line(1681, 1026.5, 3303, 1026.5, '#000');
	for (var y = 60; y < 735; y += 19.13) c.line(3303, Math.round(y) + 0.5, 3305, Math.round(y) + 0.5, '#000');
	for (y = 809; y < 1022; y += 19.1) c.line(3303, Math.round(y) + 0.5, 3305, Math.round(y) + 0.5, '#000');
	for (var x = 1699; x < 3260; x += 60) c.line(x + 0.5, 1027, x + 0.5, 1030, '#000');

	// delta table
	var delta = [-187, 2, -203, 104, -387, -624, 3, -62, -786, 391, 472, 249, 474, -145, -181, 69, -133, 64, 1030, 24, -148, 52, 627, 238, -500, -130, -58, -201, -269, 552,
		-241, -156, 298, 179, 89, 44, 313, 713, 441, -422, 148, 649, 315, 79, -538, 90, -499, 225];
	var sum = -5966;
	c.text(1682, 767, 'Delta:', '#000', 29, '', 'class="num"');
	c.text(1682, 779, 'Cumulative:', '#000', 59, '', 'class="num"');
	delta.forEach(function (d, i) {
		var cx = 1789 + STEP * i;
		sum += d;
		c.text(cx, 767, d, d < 0 ? '#e0102a' : '#000', 0, 'middle', 'class="num"');
		c.text(cx, 779, sum, '#e0102a', 27, 'middle', 'class="num"');
	});

	// histogram
	[-65, 42, -2, -15, 1, -15, 8, -27, -70, 1, -5, -58, 28, 60, 77, 109, -11, -23, 6, -10, 6, 76, 77, -11, 5, 47, 64, -35, -44, -48, -61, -80, 39, -17, -28, 22, 34, 40, 43, 64, 113,
		143, -29, 11, 55, 77, 82, -37, 7, -35, 17].forEach(function (h, i) {
		c.rect(1694 + STEP * i, h > 0 ? 943 - h : 943, 10, Math.abs(h), h > 0 ? '#808080' : '#ff2020');
	});

	c.rect(1684, 42, 131, 17, '#f00');
	c.text(1685, 56, '[SIM]&#160; Trade: 1@92.82', '#fff', 129);
	c.text(2340, 56, 'VPOC: 91.05', '#1010c0', 70);
	c.text(2419, 56, 'Vol Value Area High: 91.75', '#3a32c8', 154);
	c.text(2582, 56, 'Vol Value Area Low: 90.58', '#3a32c8', 150);
	c.rect(3305, 49, 33, 17, '#00ff00');
	c.text(3305, 63, '93.31', '#fff', 32);
	c.rect(3323, 1030, 33, 17, '#00c000');
	c.text(3328, 1044, '29 L', '#fff', 24);
	c.done();
}

chart5();
chart3();
```
